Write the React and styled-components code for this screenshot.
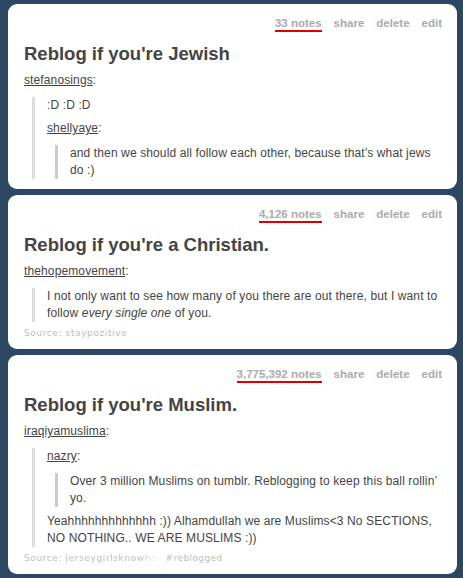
import styled, { createGlobalStyle } from "styled-components";

const GlobalStyle = createGlobalStyle`
  html, body {
    margin: 0;
    padding: 0;
    background: #2c4762;
  }
  body {
    font-family: "Liberation Sans", Arial, sans-serif;
  }
`;

const Dashboard = styled.div`
  display: flex;
  flex-direction: column;
  gap: 6px;
  padding: 4px 6px 6px 8px;
`;

const Card = styled.div`
  background: #fff;
  border-radius: 9px;
  padding: 12px 15px 10px 16px;
`;

const Meta = styled.div`
  display: flex;
  justify-content: flex-end;
  gap: 12px;
  font-size: 11.5px;
  line-height: 14px;
  font-weight: bold;
  color: #aaaaaa;
`;

const Action = styled.span``;

const Notes = styled.span`
  position: relative;
  &::after {
    content: "";
    position: absolute;
    left: 0;
    right: 0;
    bottom: -2px;
    height: 2px;
    background: #e00000;
  }
`;

const Title = styled.h2`
  margin: 13px 0 0;
  font-size: 18.5px;
  line-height: 22px;
  font-weight: bold;
  color: #444;
`;

const Body = styled.div`
  margin-top: 7px;
  font-size: 12px;
  line-height: 17px;
  letter-spacing: 0.12px;
  color: #444;
`;

const Para = styled.p`
  margin: 0 0 6px;
  &:last-child {
    margin-bottom: 0;
  }
`;

const Attribution = styled.p`
  margin: 0 0 8px;
`;

const User = styled.span`
  text-decoration: underline;
`;

const Quote = styled.blockquote`
  margin: 0 0 0 8px;
  padding-left: 12px;
  border-left: 3px solid ${(p) => (p.$nested ? "#cccccc" : "#dddddd")};
  &:not(:last-child) {
    margin-bottom: 6px;
  }
`;

const Footer = styled.div`
  margin-top: 5px;
  font-family: "DejaVu Sans", Verdana, sans-serif;
  font-size: 9px;
  line-height: 12px;
  letter-spacing: 0.6px;
  color: #bdbdbd;
  white-space: nowrap;
`;

const SourceName = styled.span`
  display: inline-block;
  vertical-align: bottom;
  ${(p) =>
    p.$truncate &&
    `
    max-width: 92px;
    overflow: hidden;
    -webkit-mask-image: linear-gradient(to right, #000 82%, transparent);
    mask-image: linear-gradient(to right, #000 82%, transparent);
  `}
`;

const Tag = styled.span`
  margin-left: 8px;
  letter-spacing: 0.4px;
`;

const posts = [
  {
    id: 1,
    notes: "33 notes",
    title: "Reblog if you're Jewish",
    body: (
      <>
        <Attribution><User>stefanosings</User>:</Attribution>
        <Quote>
          <Para>:D :D :D</Para>
          <Attribution><User>shellyaye</User>:</Attribution>
          <Quote $nested>
            <Para>and then we should all follow each other, because that’s what jews do :)</Para>
          </Quote>
        </Quote>
      </>
    ),
  },
  {
    id: 2,
    notes: "4,126 notes",
    title: "Reblog if you're a Christian.",
    body: (
      <>
        <Attribution><User>thehopemovement</User>:</Attribution>
        <Quote>
          <Para>
            I not only want to see how many of you there are out there, but I want to
            follow <em>every single one</em> of you.
          </Para>
        </Quote>
      </>
    ),
    source: "staypozitive",
  },
  {
    id: 3,
    notes: "3,775,392 notes",
    title: "Reblog if you're Muslim.",
    body: (
      <>
        <Attribution><User>iraqiyamuslima</User>:</Attribution>
        <Quote>
          <Attribution><User>nazry</User>:</Attribution>
          <Quote $nested>
            <Para>Over 3 million Muslims on tumblr. Reblogging to keep this ball rollin’ yo.</Para>
          </Quote>
          <Para>Yeahhhhhhhhhhhhh :)) Alhamdullah we are Muslims&lt;3 No SECTIONS, NO NOTHING.. WE ARE MUSLIMS :))</Para>
        </Quote>
      </>
    ),
    source: "jerseygirlsknowhow",
    truncate: true,
    tags: ["#reblogged"],
  },
];

const Post = ({ post }) => (
  <Card>
    <Meta>
      <Notes>{post.notes}</Notes>
      <Action>share</Action>
      <Action>delete</Action>
      <Action>edit</Action>
    </Meta>
    <Title>{post.title}</Title>
    <Body>{post.body}</Body>
    {post.source && (
      <Footer>
        Source: <SourceName $truncate={post.truncate}>{post.source}</SourceName>
        {post.tags && post.tags.map((t) => <Tag key={t}>{t}</Tag>)}
      </Footer>
    )}
  </Card>
);

const App = () => (
  <Dashboard>
    <GlobalStyle />
    {posts.map((p) => (
      <Post key={p.id} post={p} />
    ))}
  </Dashboard>
);

export default App;
